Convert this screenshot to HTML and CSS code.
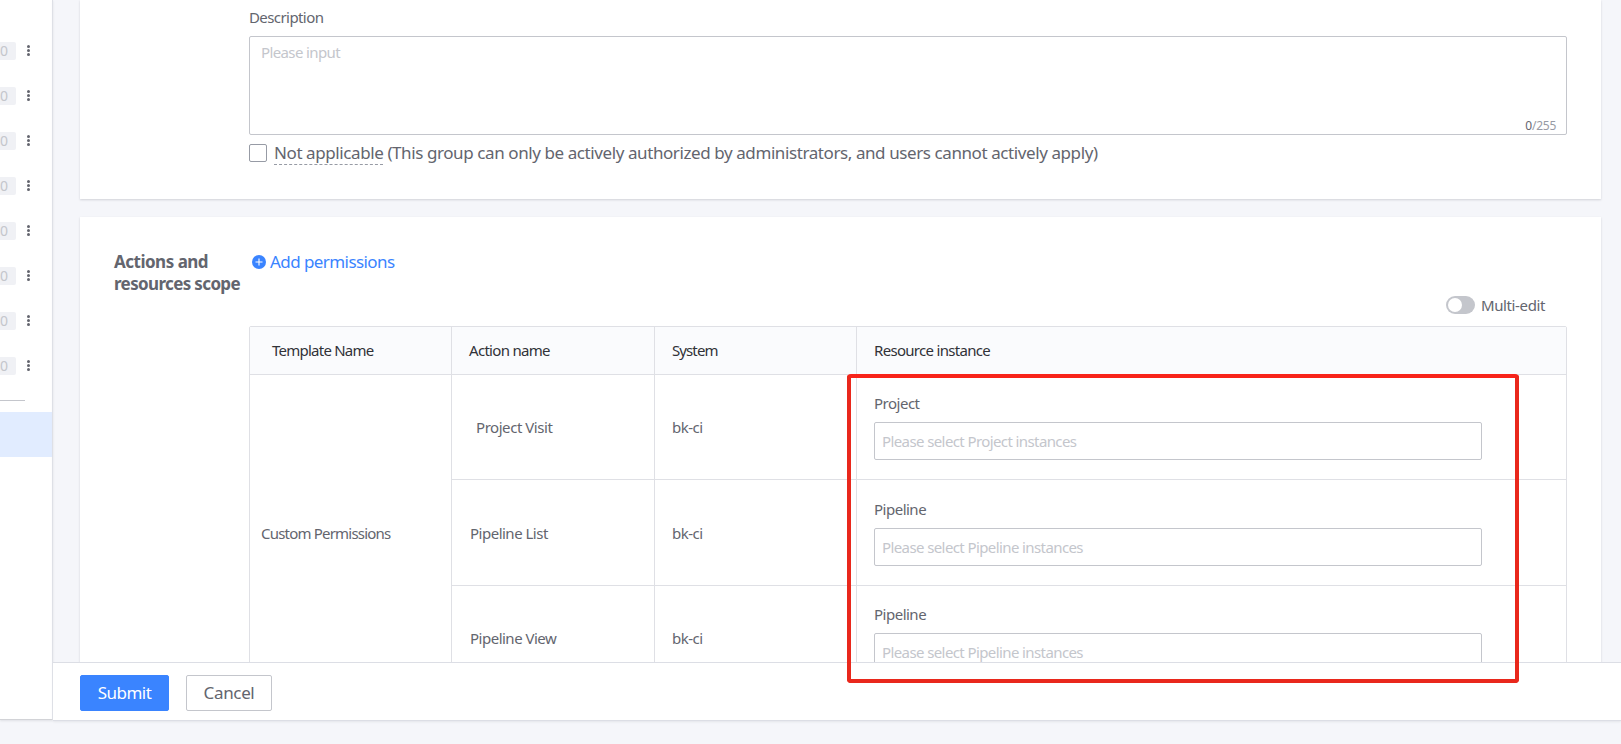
FILE: index.html
```
<!DOCTYPE html>
<html lang="en">
<head>
<meta charset="utf-8">
<title>User group permissions</title>
<link rel="stylesheet" href="styles.css">
</head>
<body>
<div class="page">
  <aside class="sidebar">
    <ul class="groups">
      <li class="group"><span class="count">0</span><span class="more"><i></i><i></i><i></i></span></li>
      <li class="group"><span class="count">0</span><span class="more"><i></i><i></i><i></i></span></li>
      <li class="group"><span class="count">0</span><span class="more"><i></i><i></i><i></i></span></li>
      <li class="group"><span class="count">0</span><span class="more"><i></i><i></i><i></i></span></li>
      <li class="group"><span class="count">0</span><span class="more"><i></i><i></i><i></i></span></li>
      <li class="group"><span class="count">0</span><span class="more"><i></i><i></i><i></i></span></li>
      <li class="group"><span class="count">0</span><span class="more"><i></i><i></i><i></i></span></li>
      <li class="group"><span class="count">0</span><span class="more"><i></i><i></i><i></i></span></li>
    </ul>
    <div class="divider"></div>
    <div class="selected"></div>
  </aside>
  <div class="main">
    <div class="scroll">
      <section class="card basic">
        <div class="label">Description</div>
        <div class="textarea"><span class="placeholder">Please input</span><span class="counter"><b>0</b>/255</span></div>
        <div class="check-row"><span class="checkbox"></span><span class="check-text"><span class="dashed">Not applicable</span> (This group can only be actively authorized by administrators, and users cannot actively apply)</span></div>
      </section>
      <section class="card scope">
        <h2 class="scope-title">Actions and<br><span class="tight">resources scope</span></h2>
        <div class="scope-body">
          <a class="add"><svg class="plus" viewBox="0 0 14 14"><circle cx="7" cy="7" r="7" fill="#3a84ff"/><path d="M7 3.5v7M3.5 7h7" stroke="#fff" stroke-width="1.1"/></svg><span>Add permissions</span></a>
          <div class="multi"><span class="switch"></span><span>Multi-edit</span></div>
          <div class="table">
            <div class="thead">
              <div class="th c1">Template Name</div><div class="th c2">Action name</div><div class="th c3">System</div><div class="th c4">Resource instance</div>
            </div>
            <div class="tbody">
              <div class="template">Custom Permissions</div>
              <div class="rows">
                <div class="row first"><div class="td c2 indent">Project Visit</div><div class="td c3">bk-ci</div><div class="td c4"><span class="res">Project</span><div class="input">Please select Project instances</div></div></div>
                <div class="row"><div class="td c2">Pipeline List</div><div class="td c3">bk-ci</div><div class="td c4"><span class="res">Pipeline</span><div class="input">Please select Pipeline instances</div></div></div>
                <div class="row last"><div class="td c2">Pipeline View</div><div class="td c3">bk-ci</div><div class="td c4"><span class="res">Pipeline</span><div class="input">Please select Pipeline instances</div></div></div>
              </div>
            </div>
          </div>
        </div>
      </section>
    </div>
    <footer class="footer"><button class="btn primary">Submit</button><button class="btn plain">Cancel</button></footer>
  </div>
</div>
<div class="highlight"></div>
</body>
</html>
```
FILE: styles.css
```
* { box-sizing: border-box; }
body { margin: 0; background: #f5f6fa; color: #63656e; font: 15px/20px "Noto Sans", "Open Sans", sans-serif; letter-spacing: -0.5px; }
.page { display: flex; width: 1621px; height: 744px; overflow: hidden; }

.sidebar { width: 53px; height: 720px; flex: none; background: #fff; border-right: 1px solid #dcdee5; border-bottom: 1px solid #d2d3d7; box-shadow: 0 1px 2px #dfe0e5; }
.groups { list-style: none; margin: 0; padding: 28px 0 0; }
.group { display: flex; align-items: center; height: 45px; }
.count { width: 16px; height: 18px; background: #f0f1f5; border-radius: 0 2px 2px 0; color: #c4c6cc; font-size: 14px; line-height: 17px; letter-spacing: 0; }
.more { display: flex; flex-direction: column; gap: 1px; margin-left: 11px; }
.more i { width: 3px; height: 3px; border-radius: 50%; background: #63656e; }
.divider { width: 25px; height: 1px; margin-top: 12px; background: #c4c6cc; }
.selected { height: 45px; margin-top: 11px; background: #e1ecff; }

.main { flex: 1; display: flex; flex-direction: column; height: 721px; border-bottom: 1px solid #dcdee5; box-shadow: 0 1px 2px #e4e5ea; }
.scroll { height: 662px; padding: 0 20px 0 27px; overflow: hidden; }
.card { background: #fff; box-shadow: 0 1px 2px rgba(25, 25, 41, .16); }
.basic { height: 199px; padding: 7px 34px 0 169px; }
.label { height: 29px; letter-spacing: -0.58px; }
.textarea { display: flex; justify-content: space-between; height: 99px; padding: 5px 10px 0 11px; border: 1px solid #c4c6cc; border-radius: 2px; }
.placeholder { color: #c4c6cc; letter-spacing: -0.62px; }
.counter { align-self: flex-end; color: #979ba5; font-size: 12px; line-height: 16px; letter-spacing: -0.25px; }
.counter b { color: #63656e; font-weight: 400; }
.check-row { display: flex; align-items: center; gap: 7px; margin-top: 7px; font-size: 17px; line-height: 22px; letter-spacing: -0.41px; }
.checkbox { width: 18px; height: 18px; border: 1px solid #979ba5; border-radius: 2px; }
.check-text { white-space: nowrap; }
.dashed { border-bottom: 1px dashed #979ba5; }

.scope { display: flex; height: 560px; margin-top: 18px; padding: 34px 34px 0 34px; }
.scope-title { width: 135px; flex: none; margin: 0; font-size: 17px; line-height: 22px; font-weight: 700; letter-spacing: -0.5px; white-space: nowrap; }
.tight { letter-spacing: -0.64px; }
.scope-body { flex: 1; }
.add { display: flex; align-items: center; gap: 4px; height: 22px; padding-left: 3px; color: #3a84ff; font-size: 17px; line-height: 22px; letter-spacing: -0.57px; }
.plus { width: 14px; height: 14px; }
.multi { display: flex; align-items: center; justify-content: flex-end; gap: 6px; height: 20px; margin-top: 22px; padding-right: 22px; letter-spacing: -0.38px; }
.switch { width: 29px; height: 18px; padding: 2px; border-radius: 9px; background: #c4c6cc; }
.switch::before { content: ""; display: block; width: 14px; height: 14px; border-radius: 50%; background: #fff; }
.table { margin-top: 11px; border: 1px solid #dfe0e5; border-radius: 2px 2px 0 0; }
.thead { display: flex; height: 48px; background: #fafbfd; border-bottom: 1px solid #dfe0e5; color: #313238; letter-spacing: -0.7px; }
.th { display: flex; align-items: center; padding-left: 17px; padding-bottom: 2px; border-right: 1px solid #dfe0e5; }
.th.c1 { width: 202px; padding-left: 22px; letter-spacing: -0.76px; }
.th.c3 { letter-spacing: -0.9px; }
.c2 { width: 203px; }
.c3 { width: 202px; }
.c4 { flex: 1; }
.th.c4, .td.c4 { border-right: 0; }
.tbody { display: flex; }
.template { display: flex; align-items: center; width: 202px; padding: 0 0 2px 11px; border-right: 1px solid #dfe0e5; letter-spacing: -0.8px; }
.rows { flex: 1; }
.row { display: flex; height: 106px; border-bottom: 1px solid #dfe0e5; }
.row.first { height: 105px; }
.td { display: flex; align-items: center; padding-left: 17px; border-right: 1px solid #dfe0e5; }
.last .td { padding-bottom: 2px; }
.td.c2 { padding-left: 18px; }
.td.c2.indent { padding-left: 24px; letter-spacing: -0.45px; }
.td.c4 { flex-direction: column; align-items: stretch; padding: 19px 84px 0 17px; }
.first .td.c4 { padding-top: 18px; }
.last .td.c4 { padding-top: 18px; }
.res { margin-bottom: 9px; }
.input { height: 38px; padding: 8px 8px 0 7px; border: 1px solid #c4c6cc; border-radius: 2px; color: #c4c6cc; letter-spacing: -0.6px; }

.footer { display: flex; gap: 17px; height: 58px; padding: 12px 0 0 27px; background: #fff; border-top: 1px solid #dcdee5; }
.btn { height: 36px; padding: 0; border-radius: 2px; font: inherit; font-size: 17px; line-height: 20px; letter-spacing: -0.5px; }
.primary { width: 89px; border: 1px solid #3a84ff; background: #3a84ff; color: #fff; }
.plain { width: 86px; border: 1px solid #c4c6cc; background: #fff; color: #63656e; letter-spacing: -0.35px; }

/* Callout frame over the resource instance column */
.highlight { position: absolute; left: 847px; top: 374px; width: 672px; height: 309px; border: 4px solid #e9281c; border-top-color: #f8231a; border-radius: 4px; }
```
